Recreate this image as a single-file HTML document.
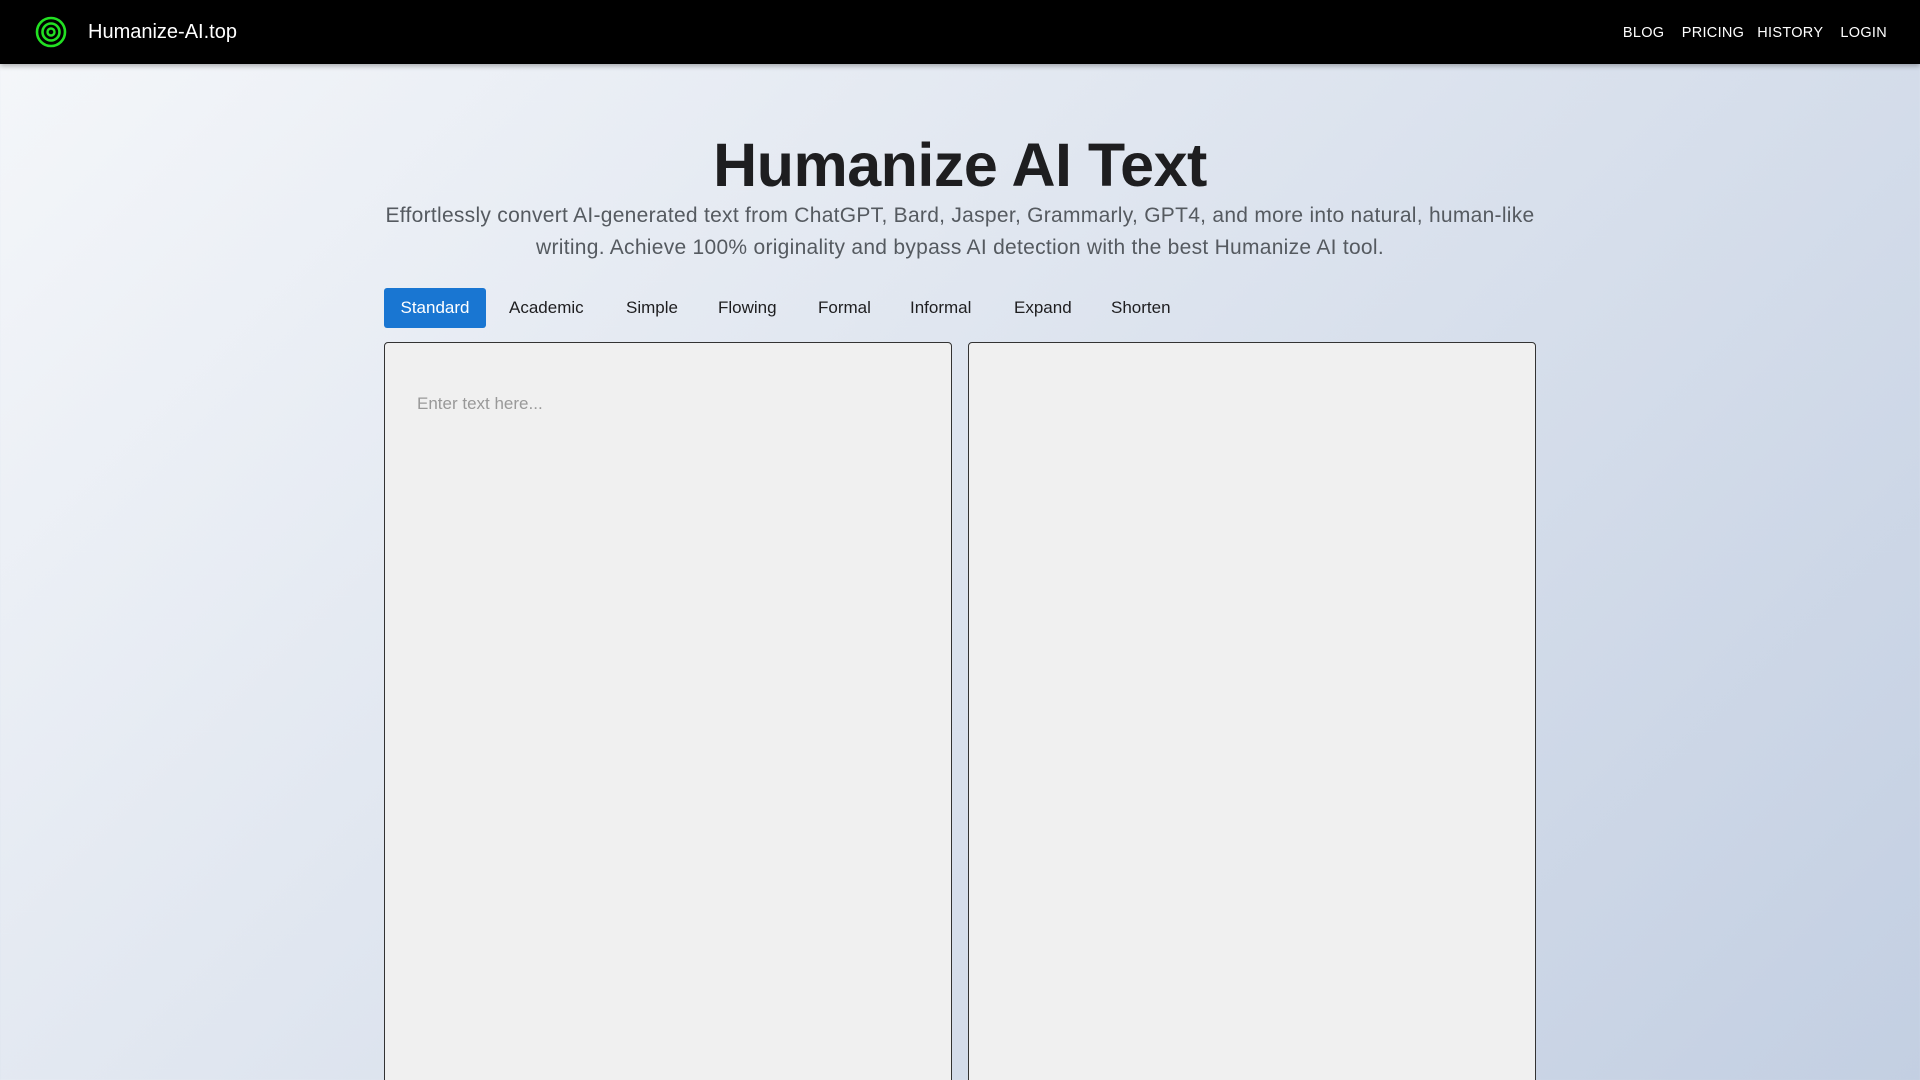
<!DOCTYPE html>
<html><head><meta charset="utf-8"><style>
*{margin:0;padding:0;box-sizing:border-box}
html,body{width:1920px;height:1080px;overflow:hidden}
body{font-family:"Liberation Sans",sans-serif;background:linear-gradient(135deg,#f5f7fa 0%,#c3cfe2 100%);position:relative}
.nav{position:absolute;left:0;top:0;width:1920px;height:64px;background:#000;box-shadow:0 2px 5px rgba(0,0,0,.3)}
.logo{position:absolute;left:35px;top:16px}
.brand{position:absolute;left:88px;top:21px;color:#fff;font-size:20px}
.links{position:absolute;right:33px;top:25px;color:#fff;font-size:14.5px;letter-spacing:.3px}
.links span{margin-left:13px}
h1{position:absolute;left:0;width:1920px;top:130px;text-align:center;font-size:61px;font-weight:bold;color:#1e1e20;letter-spacing:-.5px}
.sub{position:absolute;left:370px;width:1180px;top:200px;text-align:center;font-size:21px;letter-spacing:.28px;line-height:32px;color:#555a60}
.tab{position:absolute;top:288px;height:40px;line-height:40px;font-size:17px;color:#1e1e20}
.tab.on{background:#1976d2;color:#fff;border-radius:3px;left:384px;width:102px;text-align:center}
.box{position:absolute;top:342px;width:568px;height:760px;background:#f0f0f0;border:1px solid #333;border-radius:4px}
.ph{position:absolute;left:32px;top:51px;font-size:17px;color:#999}
</style></head><body>
<div class="nav">
<svg class="logo" width="32" height="32" viewBox="0 0 32 32"><circle cx="16" cy="16" r="14" fill="none" stroke="#22e022" stroke-width="2.6"/><circle cx="16" cy="16" r="8.5" fill="none" stroke="#22e022" stroke-width="2.6"/><circle cx="16" cy="16" r="3.5" fill="none" stroke="#22e022" stroke-width="2.4"/></svg>
<div class="brand">Humanize-AI.top</div>
<div class="links"><span>BLOG</span> <span>PRICING</span><span>HISTORY</span> <span>LOGIN</span></div>
</div>
<h1>Humanize AI Text</h1>
<div class="sub">Effortlessly convert AI-generated text from ChatGPT, Bard, Jasper, Grammarly, GPT4, and more into natural, human-like writing. Achieve 100% originality and bypass AI detection with the best Humanize AI tool.</div>
<div class="tab on">Standard</div>
<div class="tab" style="left:509px">Academic</div>
<div class="tab" style="left:626px">Simple</div>
<div class="tab" style="left:718px">Flowing</div>
<div class="tab" style="left:818px">Formal</div>
<div class="tab" style="left:910px">Informal</div>
<div class="tab" style="left:1014px">Expand</div>
<div class="tab" style="left:1111px">Shorten</div>
<div class="box" style="left:384px"><div class="ph">Enter text here...</div></div>
<div class="box" style="left:968px"></div>
</body></html>
